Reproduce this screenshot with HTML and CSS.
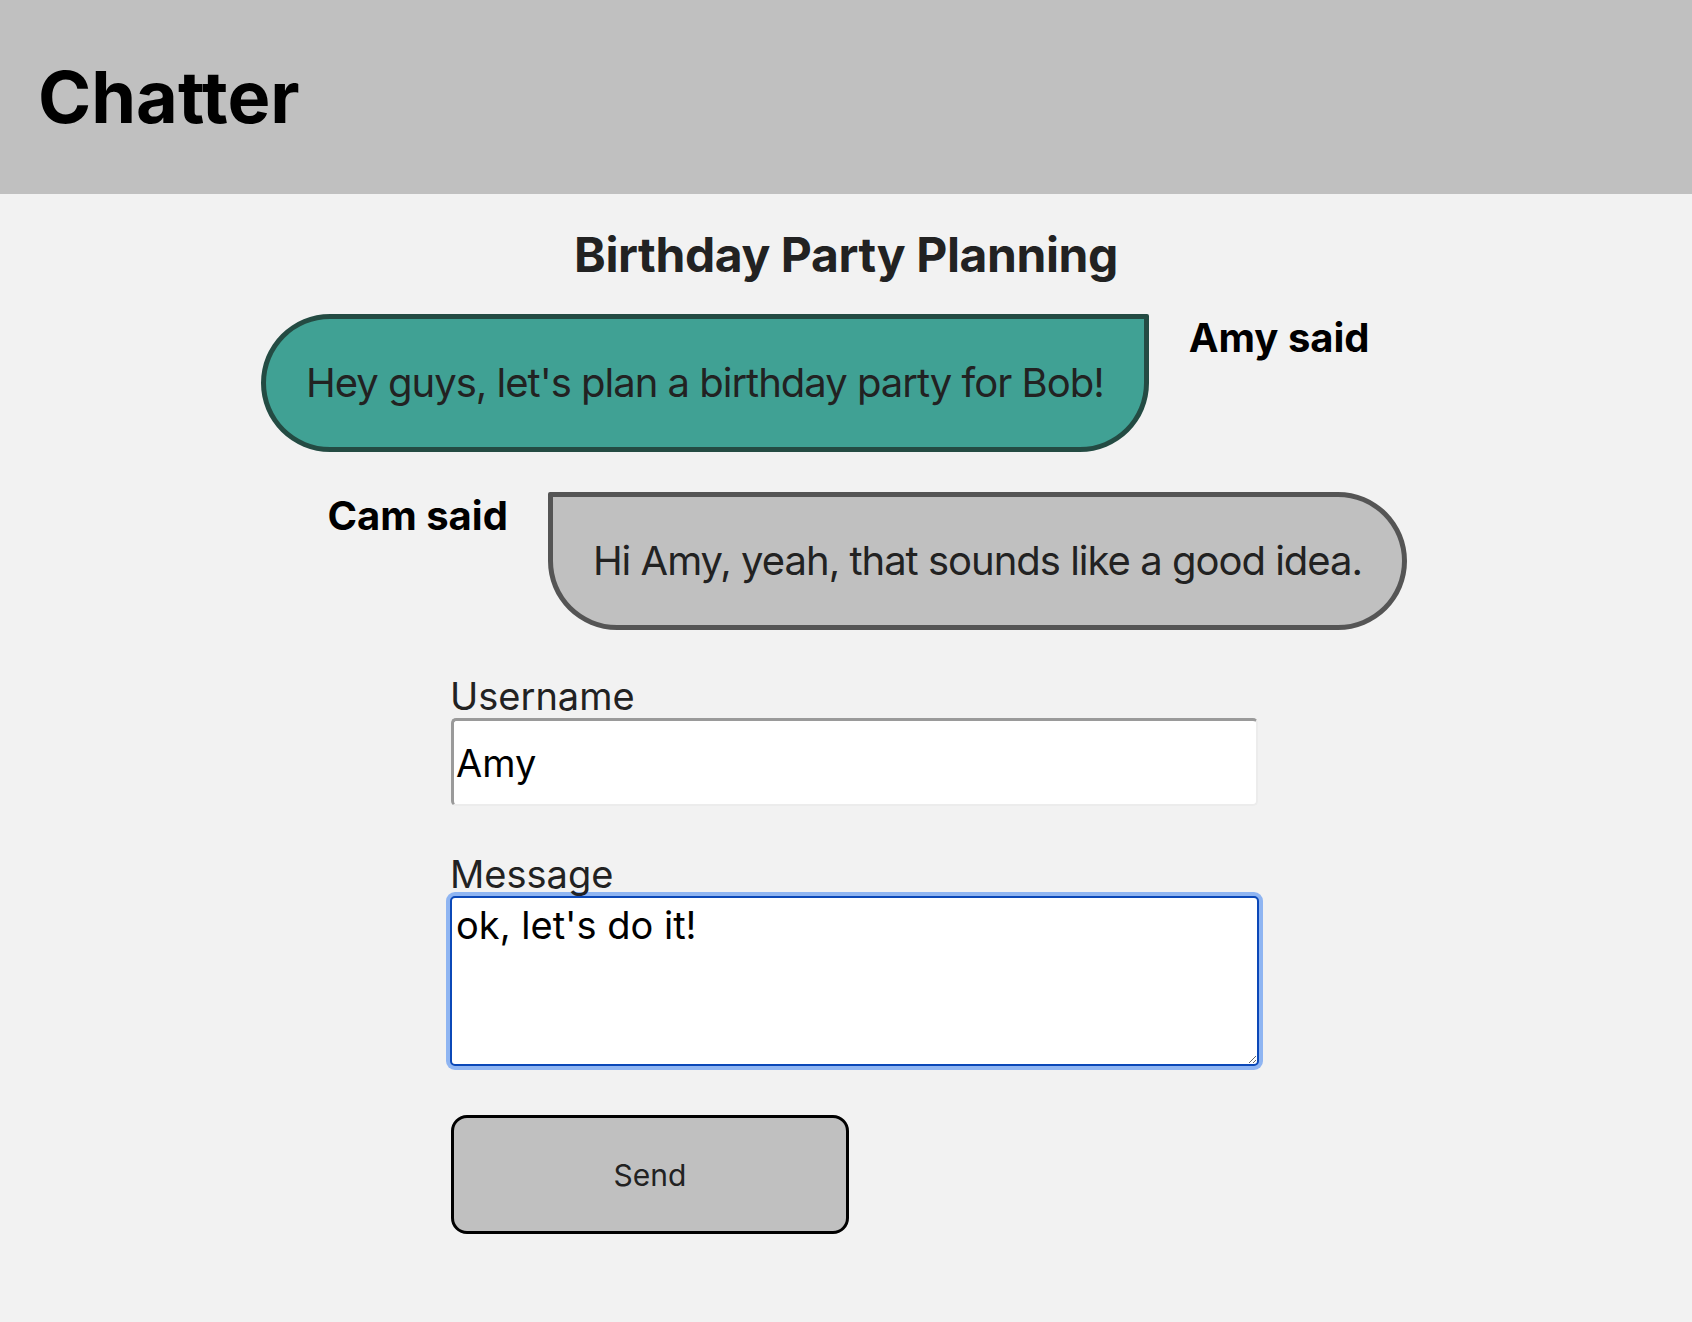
FILE: index.html
```html
<!DOCTYPE html>
<html lang="en">
<head>
    <meta charset="UTF-8">
    <meta name="viewport" content="width=device-width, initial-scale=1.0">
    <title>Chatter</title>
    <link rel="stylesheet" href="styles.css">
</head>
<body>
    <header class="topbar">
        <h1 class="brand">Chatter</h1>
    </header>
    <main class="room">
        <h2 class="room-title">Birthday Party Planning</h2>
        <div class="thread">
            <div class="msg">
                <p class="bubble bubble-mine">Hey guys, let's plan a birthday party for Bob!</p>
                <span class="author">Amy said</span>
            </div>
            <div class="msg msg-other">
                <span class="author">Cam said</span>
                <p class="bubble bubble-other">Hi Amy, yeah, that sounds like a good idea.</p>
            </div>
        </div>
        <form class="compose" onsubmit="return false">
            <label for="username">Username</label>
            <input type="text" id="username" class="name-box" value="Amy">
            <label for="message">Message</label>
            <textarea id="message" class="message-box">ok, let's do it!</textarea>
            <button type="submit" class="send-btn">Send</button>
        </form>
    </main>
    <script>
        let box = document.getElementById("message");
        box.focus();
        box.setSelectionRange(box.value.length, box.value.length);
    </script>
</body>
</html>
```

FILE: styles.css
```css
body {
    margin: 0;
    font-family: Inter, "Noto Sans", sans-serif;
    background: #f2f2f2;
    color: #222;
}
.topbar {
    background: #c0c0c0;
    height: 194px;
    display: flex;
    align-items: center;
    padding-left: 38px;
}
.brand {
    margin: 0;
    font-size: 72px;
    font-weight: 700;
    color: #000;
    line-height: 1.2;
}
.room-title {
    margin: 32px 0 30px;
    text-align: center;
    font-size: 48px;
    font-weight: 700;
    line-height: 58px;
    letter-spacing: -0.4px;
    color: #222;
}
.thread {
    width: 1146px;
    margin-left: 261px;
    display: flex;
    flex-direction: column;
    gap: 40px;
}
.msg {
    display: flex;
    align-items: flex-start;
    gap: 40px;
}
.msg-other {
    justify-content: flex-end;
}
.author {
    font-size: 40px;
    font-weight: 700;
    line-height: 48px;
    white-space: nowrap;
    color: #000;
}
.bubble {
    margin: 0;
    padding: 40px;
    font-size: 40px;
    line-height: 48px;
    letter-spacing: -1px;
    white-space: nowrap;
    color: #222;
    border: 5px solid;
}
.bubble-mine {
    background: #40a194;
    border-color: #244b43;
    border-radius: 69px 2px 69px 69px;
}
.bubble-other {
    background: #c0c0c0;
    border-color: #555;
    border-radius: 2px 69px 69px 69px;
}
.compose {
    width: 808px;
    margin: 44px 0 0 450px;
    padding-bottom: 89px;
}
.compose label {
    display: block;
    font-size: 38px;
    line-height: 44px;
    color: #222;
}
.name-box {
    display: block;
    box-sizing: border-box;
    width: 807px;
    height: 88px;
    margin: 0 0 46px 1px;
    padding: 0 2px;
    font-family: inherit;
    font-size: 38px;
    color: #000;
    background: #fff;
    border-style: solid;
    border-width: 3px 2px 2px 3px;
    border-color: #9a9a9a #ececec #ececec #9a9a9a;
    border-radius: 5px;
    outline: none;
}
.message-box {
    display: block;
    box-sizing: border-box;
    width: 809px;
    height: 170px;
    margin: 0 0 49px;
    padding: 4px 4px;
    font-family: inherit;
    font-size: 38px;
    line-height: 46px;
    color: #000;
    caret-color: #000;
    background: #fff;
    border: 2px solid #0b48b8;
    border-radius: 5px;
    box-shadow: 0 0 0 4px #8fb5f2;
    outline: none;
}
.send-btn {
    display: block;
    width: 398px;
    height: 119px;
    margin-left: 1px;
    font-family: inherit;
    font-size: 30px;
    color: #222;
    background: #c0c0c0;
    border: 3px solid #000;
    border-radius: 16px;
}
```
